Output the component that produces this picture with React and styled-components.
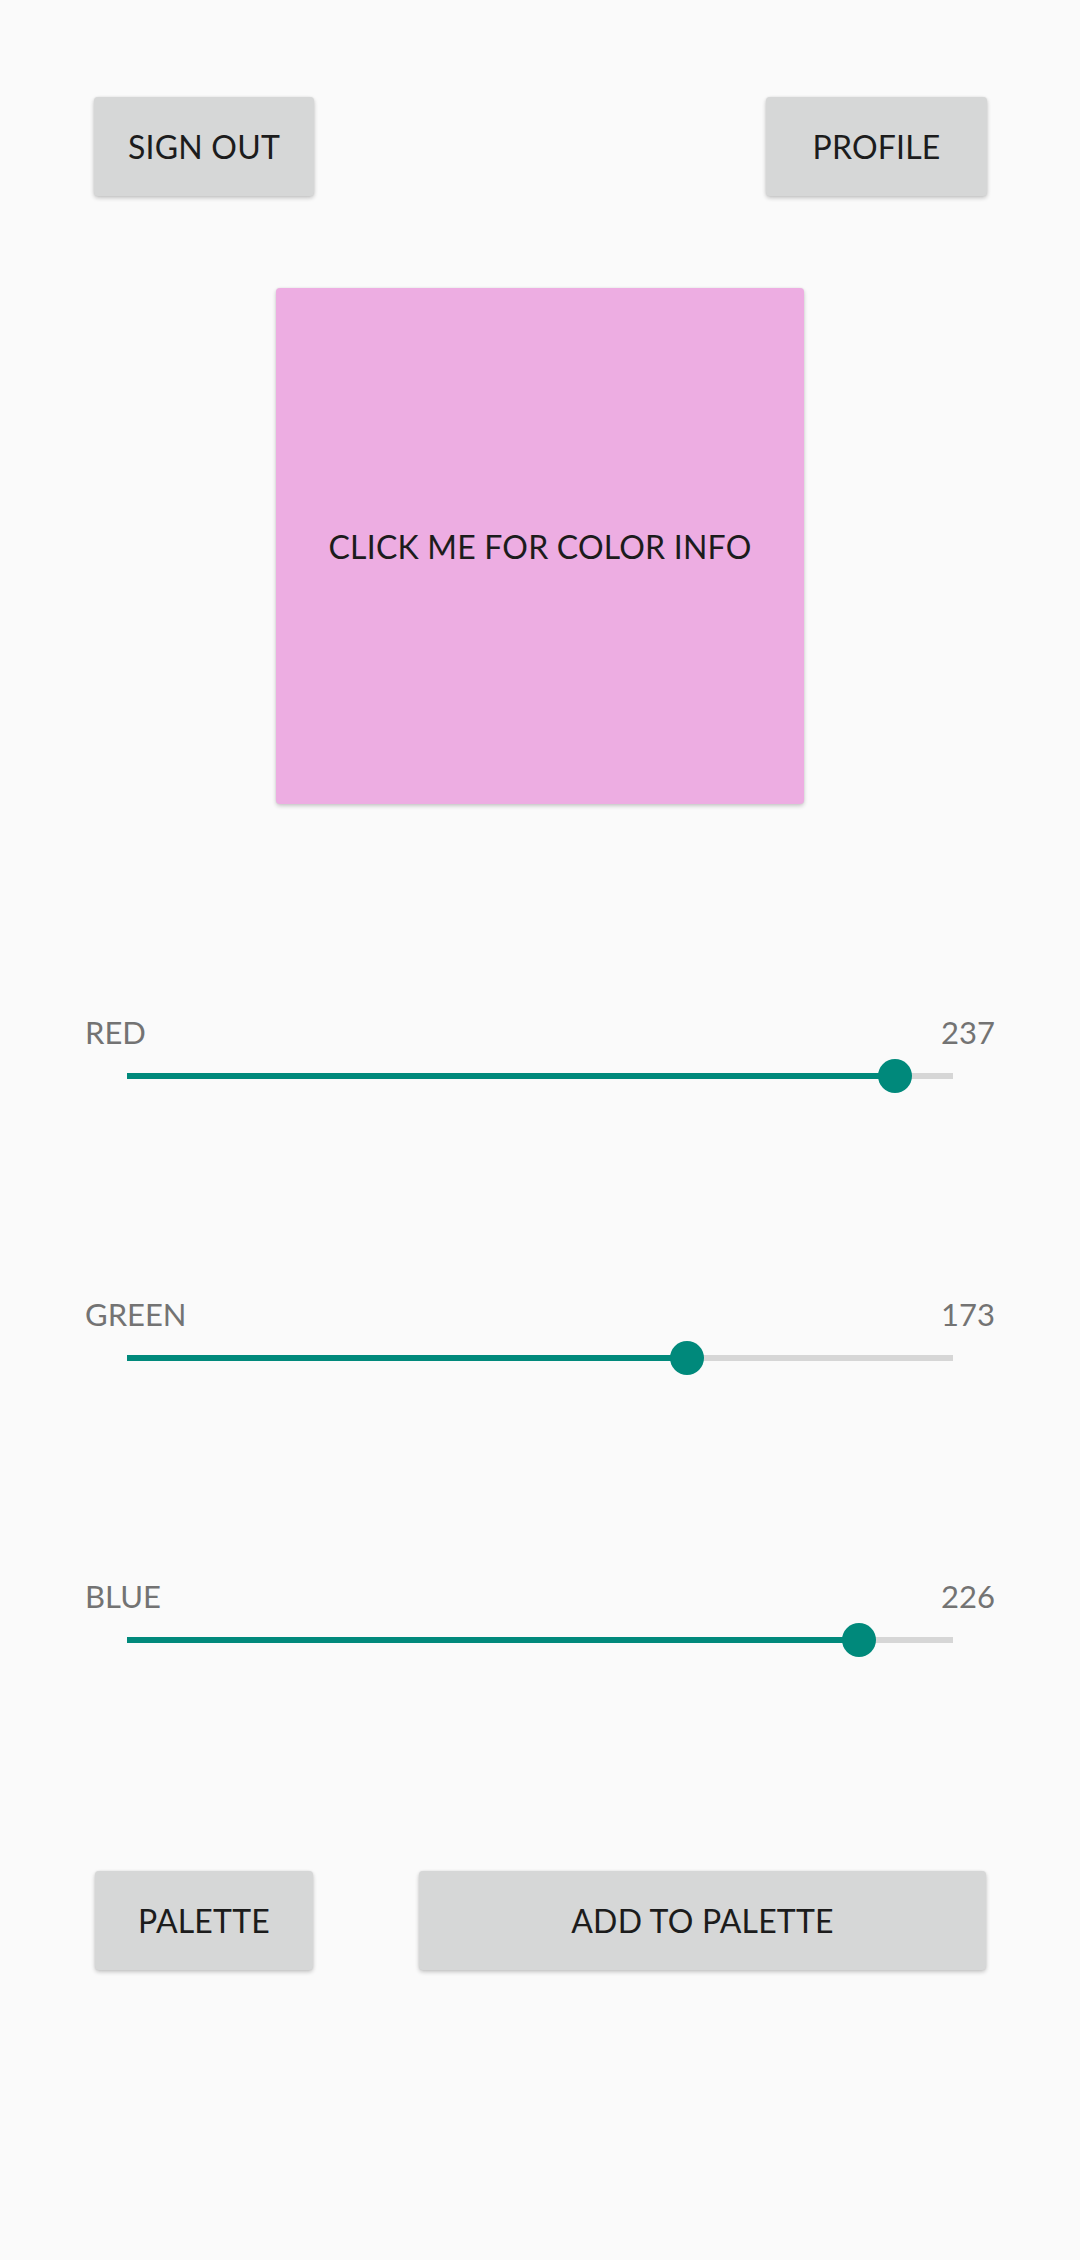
import React from "react";
import styled, { createGlobalStyle } from "styled-components";

const GlobalStyle = createGlobalStyle`
  html, body {
    margin: 0;
    padding: 0;
    background: #fafafa;
  }
  body {
    font-family: "Lato", "Open Sans", sans-serif;
  }
`;

const Screen = styled.div`
  width: 1080px;
  min-height: 2260px;
  background: #fafafa;
  display: flex;
  flex-direction: column;
  box-sizing: border-box;
  padding-top: 97px;
`;

const TopBar = styled.div`
  display: flex;
  justify-content: space-between;
  padding: 0 93px 0 94px;
`;

const Button = styled.button`
  width: ${(p) => p.width || 220}px;
  height: 99px;
  border: none;
  border-radius: 4px;
  background: #d6d7d7;
  box-shadow: 0 2px 4px rgba(0, 0, 0, 0.22), 0 0 2px rgba(0, 0, 0, 0.08);
  color: #1c1c1c;
  font-family: "Lato", "Open Sans", sans-serif;
  font-size: 32px;
  font-weight: 400;
  letter-spacing: 0.2px;
  text-transform: uppercase;
  padding: 0;
  cursor: pointer;
`;

const Swatch = styled.div`
  align-self: center;
  width: 528px;
  height: 516px;
  margin-top: 92px;
  border-radius: 4px;
  background: ${(p) => p.color};
  box-shadow: 0 2px 4px rgba(0, 0, 0, 0.2), 0 0 2px rgba(0, 0, 0, 0.08);
  display: flex;
  align-items: center;
  justify-content: center;
  color: #1c1c1c;
  font-size: 32px;
  letter-spacing: 0.2px;
  cursor: pointer;
`;

const Sliders = styled.div`
  display: flex;
  flex-direction: column;
  gap: 194px;
  margin-top: 208px;
  padding: 0 85px;
`;

const SliderBlock = styled.div`
  display: flex;
  flex-direction: column;
`;

const LabelRow = styled.div`
  display: flex;
  justify-content: space-between;
  color: #737373;
  font-size: 31px;
  line-height: 40px;
`;

const TrackWrap = styled.div`
  position: relative;
  height: 48px;
  margin: 0 42px;
  display: flex;
  align-items: center;
`;

const Track = styled.div`
  position: relative;
  width: 100%;
  height: 6px;
  background: #d6d6d6;
`;

const Fill = styled.div`
  height: 100%;
  background: #00897b;
`;

const Thumb = styled.div`
  position: absolute;
  top: 50%;
  width: 34px;
  height: 34px;
  border-radius: 50%;
  background: #00897b;
  transform: translate(-50%, -50%);
`;

const BottomBar = styled.div`
  display: flex;
  gap: 106px;
  padding: 0 94px 0 95px;
  margin-top: 207px;
`;

function ColorSlider({ name, value }) {
  const pct = (value / 255) * 100;
  return (
    <SliderBlock>
      <LabelRow>
        <span>{name}</span>
        <span>{value}</span>
      </LabelRow>
      <TrackWrap>
        <Track>
          <Fill style={{ width: `${pct}%` }} />
          <Thumb style={{ left: `${pct}%` }} />
        </Track>
      </TrackWrap>
    </SliderBlock>
  );
}

export default function App() {
  const r = 237;
  const g = 173;
  const b = 226;
  return (
    <>
      <GlobalStyle />
      <Screen>
        <TopBar>
          <Button width={220}>Sign out</Button>
          <Button width={221}>Profile</Button>
        </TopBar>
        <Swatch color={`rgb(${r}, ${g}, ${b})`}>CLICK ME FOR COLOR INFO</Swatch>
        <Sliders>
          <ColorSlider name="RED" value={r} />
          <ColorSlider name="GREEN" value={g} />
          <ColorSlider name="BLUE" value={b} />
        </Sliders>
        <BottomBar>
          <Button width={218}>Palette</Button>
          <Button width={567}>Add to palette</Button>
        </BottomBar>
      </Screen>
    </>
  );
}
